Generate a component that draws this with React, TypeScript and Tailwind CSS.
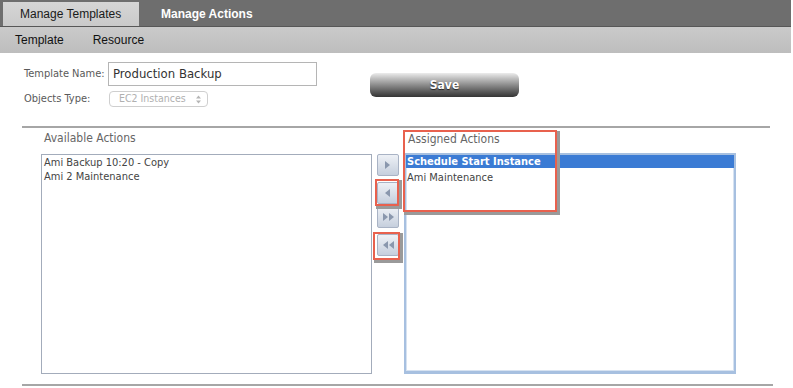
import React from "react";

const tahoma = "font-['DejaVu_Sans_Condensed','DejaVu_Sans',sans-serif]";

function ArrowButton({ dir, double }: { dir: "right" | "left"; double?: boolean }) {
  const tri = dir === "right" ? "M0 0 L5 4 L0 8 Z" : "M5 0 L0 4 L5 8 Z";
  return (
    <div className="w-[22px] h-[22px] rounded-[2px] border border-[#a9b3c5] bg-gradient-to-b from-[#eef1f6] to-[#c6cfdd] flex items-center justify-center">
      <svg width={double ? 11 : 6} height="9" viewBox={double ? "0 0 11 9" : "0 0 6 9"}>
        <path d={tri} fill="#8a97ad" />
        {double && <path d={tri} fill="#8a97ad" transform="translate(6 0)" />}
      </svg>
    </div>
  );
}

export default function App() {
  return (
    <div className="relative w-[793px] h-[388px] bg-white overflow-hidden">
      {/* top tabs */}
      <div className="w-[791px] h-[27px] bg-[#6e6e6e] border-b border-[#575757] flex items-end pl-[3px] font-['Liberation_Sans',Arial,sans-serif] text-[12px]">
        <div className="w-[136px] h-[24px] bg-gradient-to-b from-[#d6d6d6] to-[#cacaca] flex items-center pl-[17px] text-[#1a1a1a]">
          Manage Templates
        </div>
        <div className="h-[24px] flex items-center pl-[22px] text-white font-bold">Manage Actions</div>
      </div>
      <div className="w-[791px] h-[26px] bg-gradient-to-b from-[#cacaca] to-[#bdbdbd] flex items-center gap-[29px] pl-[15px] font-['Liberation_Sans',Arial,sans-serif] text-[12px] text-[#111]">
        <span>Template</span>
        <span>Resource</span>
      </div>

      {/* form */}
      <div className={`flex pl-[24px] pt-[9px] h-[73px] ${tahoma}`}>
        <div className="flex flex-col gap-[5px]">
          <div className="flex items-center h-[24px]">
            <span className="w-[84px] text-[11px] text-[#5a5a5a]">Template Name:</span>
            <div className="w-[209px] h-[24px] border border-[#b5b5b5] flex items-center pl-[4px] text-[13px] text-[#333]">
              Production Backup
            </div>
          </div>
          <div className="flex items-center h-[16px]">
            <span className="w-[85px] text-[11px] text-[#5a5a5a]">Objects Type:</span>
            <div className="w-[99px] h-[16px] border border-[#cfcfcf] rounded-[4px] flex items-center justify-between pl-[9px] pr-[6px] text-[10.5px] text-[#b0b0b0]">
              <span>EC2 Instances</span>
              <svg width="5" height="9" viewBox="0 0 5 9">
                <path d="M0 3.5 L2.5 0.5 L5 3.5 Z M0 5.5 L2.5 8.5 L5 5.5 Z" fill="#b5b5b5" />
              </svg>
            </div>
          </div>
        </div>
        <div className="ml-[53px] mt-[11px] w-[149px] h-[24px] rounded-[6px] bg-gradient-to-b from-[#ececec] via-[#8c8c8c] to-[#353535] flex items-center justify-center text-white font-bold text-[12px] [text-shadow:0_1px_1px_#222]">
          Save
        </div>
      </div>

      <div className="ml-[22px] w-[748px] border-t-2 border-[#a6a6a6]" />

      {/* lists */}
      <div className={`flex pl-[41px] ${tahoma}`}>
        <div className="flex flex-col">
          <div className="h-[26px] pl-[3px] pt-[2px] text-[12px] leading-[16px] text-[#666]">Available Actions</div>
          <div className="w-[331px] h-[220px] border border-[#a3acbb] pl-[2px] pt-[1px] text-[11px] leading-[14px] text-[#444]">
            <div>Ami Backup 10:20 - Copy</div>
            <div>Ami 2 Maintenance</div>
          </div>
        </div>
        <div className="flex flex-col gap-[8px] pt-[26px] pl-[5px] w-[32px]">
          <ArrowButton dir="right" />
          <div className="-mt-[2px]">
            <ArrowButton dir="left" />
          </div>
          <div className="-mt-[6px]">
            <ArrowButton dir="right" double />
          </div>
          <div className="mt-[-2px]">
            <ArrowButton dir="left" double />
          </div>
        </div>
        <div className="flex flex-col">
          <div className="h-[25px] pl-[4px] pt-[3px] text-[12px] leading-[16px] text-[#666]">Assigned Actions</div>
          <div className="w-[332px] h-[221px] border-2 border-b-[3px] border-[#a7c0e0] bg-white shadow-[inset_0_0_0_1px_#d6e2f1] text-[11px] leading-[14px] text-[#444]">
            <div className="h-[13px] bg-[#3b7bd4] text-white font-bold pl-[1px] leading-[13px]">Schedule Start Instance</div>
            <div className="pl-[1px] pt-[3px]">Ami Maintenance</div>
          </div>
        </div>
      </div>

      <div className="ml-[22px] mt-[10px] w-[751px] border-t-2 border-[#a6a6a6]" />

      {/* annotation highlights */}
      <div className="absolute left-[403px] top-[130px] w-[154px] h-[82px] border-2 border-[#e8614e] shadow-[2px_2px_0_1px_#9a9a9a]" />
      <div className="absolute left-[375px] top-[179px] w-[24px] h-[27px] border-2 border-[#e8614e] shadow-[2px_2px_0_1px_#9a9a9a]" />
      <div className="absolute left-[373px] top-[232px] w-[27px] h-[28px] border-2 border-[#e8614e] shadow-[2px_2px_0_1px_#9a9a9a]" />
    </div>
  );
}
